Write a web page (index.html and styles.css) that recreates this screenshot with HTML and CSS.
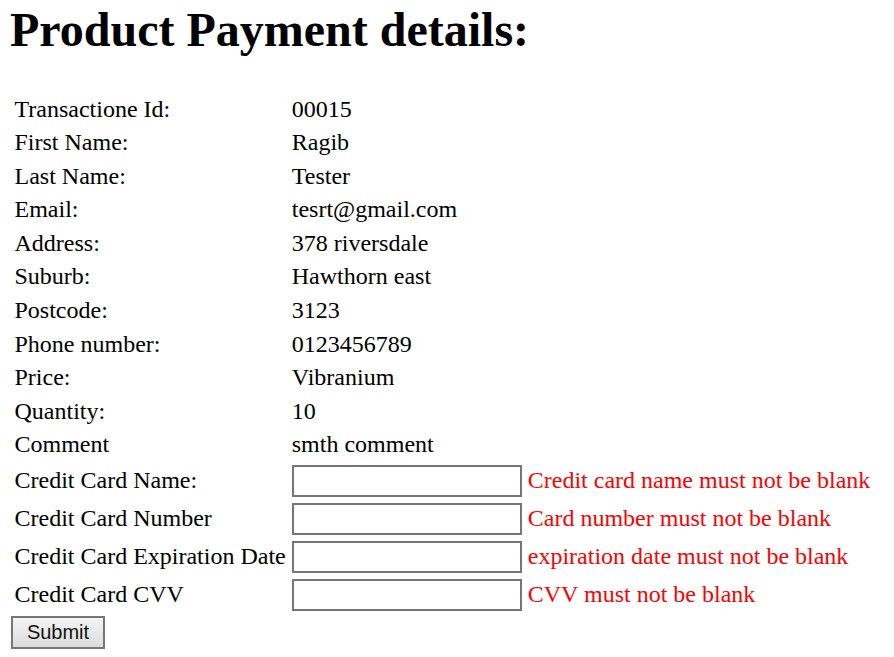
FILE: index.html
```html
<!DOCTYPE html>
<html>
<head>
<meta charset="utf-8">
<title>Product Payment details</title>
<link rel="stylesheet" href="styles.css">
</head>
<body>
<h1 class="title">Product Payment details:</h1>
<form class="pay-form">
<table class="details">
<tr><td>Transactione Id:</td><td>00015</td></tr>
<tr><td>First Name:</td><td>Ragib</td></tr>
<tr><td>Last Name:</td><td>Tester</td></tr>
<tr><td>Email:</td><td>tesrt@gmail.com</td></tr>
<tr><td>Address:</td><td>378 riversdale</td></tr>
<tr><td>Suburb:</td><td>Hawthorn east</td></tr>
<tr><td>Postcode:</td><td>3123</td></tr>
<tr><td>Phone number:</td><td>0123456789</td></tr>
<tr><td>Price:</td><td>Vibranium</td></tr>
<tr><td>Quantity:</td><td>10</td></tr>
<tr><td>Comment</td><td>smth comment</td></tr>
<tr><td>Credit Card Name:</td><td><input class="field" type="text"></td><td class="error">Credit card name must not be blank</td></tr>
<tr><td>Credit Card Number</td><td><input class="field" type="text"></td><td class="error">Card number must not be blank</td></tr>
<tr><td>Credit Card Expiration Date</td><td><input class="field" type="text"></td><td class="error">expiration date must not be blank</td></tr>
<tr><td>Credit Card CVV</td><td><input class="field" type="text"></td><td class="error">CVV must not be blank</td></tr>
</table>
<button class="submit" type="submit">Submit</button>
</form>
</body>
</html>
```
FILE: styles.css
```css
html, body {
  background: #ffffff;
}
body {
  margin: 0;
  padding: 0 0 0 10px;
  font-family: "Liberation Serif", "Times New Roman", serif;
  font-size: 24px;
  color: #000000;
}
.title {
  font-size: 48px;
  font-weight: bold;
  margin: 0 0 34px 0;
  padding-top: 2px;
  line-height: 55px;
}
.details {
  border-collapse: separate;
  border-spacing: 3px;
  font-size: 24px;
  line-height: 27.6px;
}
.details td {
  padding: 1.5px;
  vertical-align: middle;
  white-space: nowrap;
}
.field {
  box-sizing: border-box;
  display: block;
  width: 230px;
  height: 32px;
  margin: 0;
  border: 2px solid #767676;
  border-radius: 0;
  padding: 1px 3px;
  font-family: "Liberation Sans", Arial, sans-serif;
  font-size: 20px;
  background: #ffffff;
}
.error {
  color: #ff0000;
}
.submit {
  display: block;
  box-sizing: border-box;
  width: 94px;
  height: 33px;
  margin: 0 0 0 1px;
  padding: 0;
  border: 2px solid #767676;
  border-radius: 0;
  background: linear-gradient(#f4f4f4, #dcdcdc);
  font-family: "Liberation Sans", Arial, sans-serif;
  font-size: 20px;
  color: #111111;
}
```
